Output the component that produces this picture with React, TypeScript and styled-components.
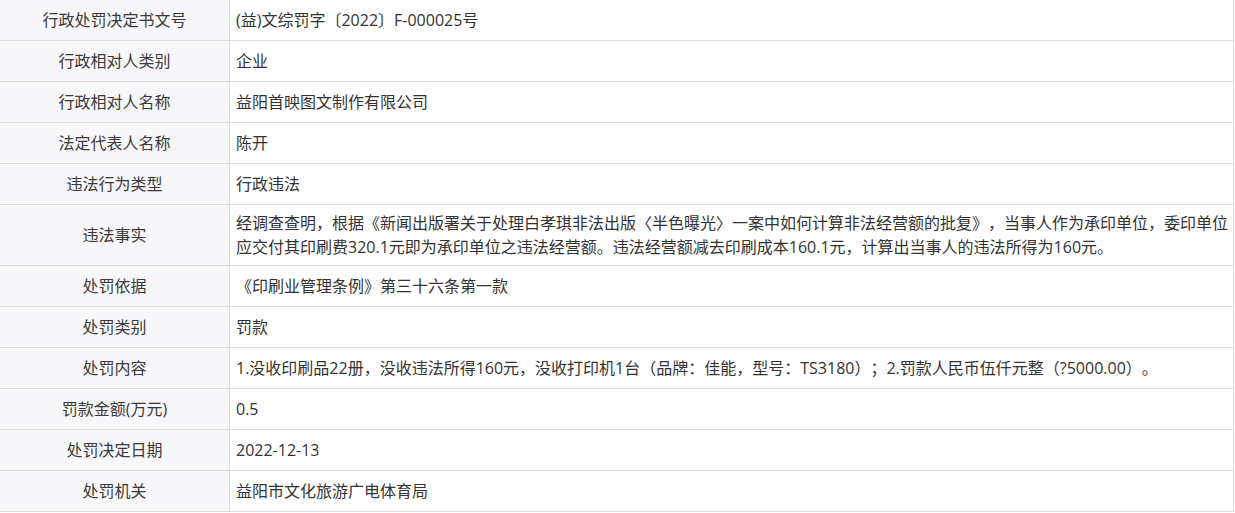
import React from 'react';
import styled, { createGlobalStyle } from 'styled-components';

const GlobalStyle = createGlobalStyle`
  html, body {
    margin: 0;
    padding: 0;
    background: #fff;
  }
  body {
    font-family: "Open Sans", "Noto Sans CJK SC", sans-serif;
    color: #333;
    text-spacing-trim: space-all;
  }
`;

const Table = styled.div`
  width: 1234px;
  display: grid;
  grid-template-columns: 230px 1fr;
  font-size: 16px;
  line-height: 24px;
`;

const Cell = styled.div<{ $tall?: boolean }>`
  box-sizing: border-box;
  min-height: ${({ $tall }) => ($tall ? 61 : 41)}px;
  border-right: 1px solid #dcdcdc;
  border-bottom: 1px solid #dcdcdc;
  display: flex;
  align-items: center;
`;

const Label = styled(Cell)`
  background: #f7f7f9;
  justify-content: center;
  text-align: center;
  color: #3a3a3a;
`;

const Value = styled(Cell)`
  padding: 6px 0 6px 6px;
  color: #333;
  overflow: hidden;
`;

const Line = styled.span`
  display: block;
  white-space: nowrap;
`;

type Row = { label: string; value: React.ReactNode; tall?: boolean };

const rows: Row[] = [
  { label: '行政处罚决定书文号', value: '(益)文综罚字〔2022〕F-000025号' },
  { label: '行政相对人类别', value: '企业' },
  { label: '行政相对人名称', value: '益阳首映图文制作有限公司' },
  { label: '法定代表人名称', value: '陈开' },
  { label: '违法行为类型', value: '行政违法' },
  {
    label: '违法事实',
    tall: true,
    value: (
      <>
        <Line>经调查查明，根据《新闻出版署关于处理白孝琪非法出版〈半色曝光〉一案中如何计算非法经营额的批复》，当事人作为承印单位，委印单位</Line>
        <Line>应交付其印刷费320.1元即为承印单位之违法经营额。违法经营额减去印刷成本160.1元，计算出当事人的违法所得为160元。</Line>
      </>
    ),
  },
  { label: '处罚依据', value: '《印刷业管理条例》第三十六条第一款' },
  { label: '处罚类别', value: '罚款' },
  {
    label: '处罚内容',
    value: '1.没收印刷品22册，没收违法所得160元，没收打印机1台（品牌：佳能，型号：TS3180）；2.罚款人民币伍仟元整（?5000.00）。',
  },
  { label: '罚款金额(万元)', value: '0.5' },
  { label: '处罚决定日期', value: '2022-12-13' },
  { label: '处罚机关', value: '益阳市文化旅游广电体育局' },
];

export default function App() {
  return (
    <>
      <GlobalStyle />
      <Table>
        {rows.map((r) => (
          <React.Fragment key={r.label}>
            <Label $tall={r.tall}>{r.label}</Label>
            <Value $tall={r.tall}>
              <span>{r.value}</span>
            </Value>
          </React.Fragment>
        ))}
      </Table>
    </>
  );
}
